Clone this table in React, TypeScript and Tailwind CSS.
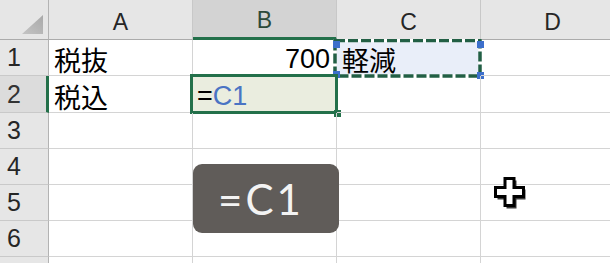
import React from "react";

const FONT = { fontFamily: '"Liberation Sans", "Noto Sans CJK JP", sans-serif' };

function HeaderCell({ label, selected }: { label: string; selected?: boolean }) {
  return (
    <div
      className={
        "flex items-end justify-center border-r border-r-[#c8c8c8] text-[23px] leading-none pb-[5px] " +
        (selected
          ? "bg-[#d3d3d3] border-b-[3px] border-b-[#23704a] text-[#2c4a3a] pt-0"
          : "bg-[#e6e6e6] border-b border-b-[#ababab] text-[#262626]")
      }
    >
      {label}
    </div>
  );
}

function RowHead({ n, selected }: { n?: number; selected?: boolean }) {
  return (
    <div
      className={
        "flex items-center pl-[7px] text-[25px] leading-none border-b border-b-[#c9c9c9] " +
        (selected
          ? "bg-[#dcdcdc] border-r-[3px] border-r-[#23704a] text-[#333]"
          : "bg-[#e6e6e6] border-r border-r-[#b3b3b3] text-[#262626]")
      }
    >
      {n}
    </div>
  );
}

function Cell({
  children,
  className = "",
}: {
  children?: React.ReactNode;
  className?: string;
}) {
  return (
    <div
      className={
        "relative flex items-end border-r border-b border-[#d4d4d4] text-[27px] leading-none pb-[2px] " +
        className
      }
    >
      {children}
    </div>
  );
}

function Handle({ className }: { className: string }) {
  return <div className={"absolute w-[7px] h-[7px] bg-[#3c6fcb] " + className} />;
}

export default function App() {
  return (
    <div className="relative w-[610px] h-[263px] overflow-hidden bg-white" style={FONT}>
      <div className="grid grid-cols-[49px_144px_144px_144px_144px] grid-rows-[40px_36px_37px_36px_36px_36px_36px_36px]">
        {/* header row */}
        <div className="relative bg-[#e6e6e6] border-r border-r-[#b3b3b3] border-b border-b-[#ababab]">
          <svg className="absolute left-[22px] top-[15px]" width="21" height="19" viewBox="0 0 21 19">
            <defs>
              <linearGradient id="tri" x1="0" y1="1" x2="1" y2="0">
                <stop offset="0" stopColor="#c4c4c4" />
                <stop offset="1" stopColor="#a9a9a9" />
              </linearGradient>
            </defs>
            <polygon points="21,0 21,19 0,19" fill="url(#tri)" />
          </svg>
        </div>
        <HeaderCell label="A" />
        <HeaderCell label="B" selected />
        <HeaderCell label="C" />
        <HeaderCell label="D" />

        {/* row 1 */}
        <RowHead n={1} />
        <Cell className="pl-[5px]">
          <span style={{ fontFamily: '"Noto Sans CJK JP", sans-serif' }}>税抜</span>
        </Cell>
        <Cell className="justify-end pr-[6px]">
          <span>700</span>
        </Cell>
        <Cell className="bg-[#e9eef9] pl-[5px] overflow-visible">
          <span style={{ fontFamily: '"Noto Sans CJK JP", sans-serif' }}>軽減</span>
          {/* marching ants */}
          <svg
            className="absolute left-[-4px] top-[-1px] pointer-events-none"
            width="150"
            height="39"
            viewBox="0 0 150 39"
          >
            <rect x="2" y="1.5" width="145" height="35.5" fill="none" stroke="#ffffff" strokeWidth="3.5" />
            <rect
              x="2"
              y="1.5"
              width="145"
              height="35.5"
              fill="none"
              stroke="#225f45"
              strokeWidth="3.5"
              strokeDasharray="10 3"
            />
          </svg>
          <Handle className="left-[-4px] top-[1px] h-[5px]" />
          <Handle className="right-[-4px] top-[1px] h-[5px]" />
          <Handle className="left-[-4px] bottom-[-3px]" />
          <Handle className="right-[-4px] bottom-[-4px]" />
        </Cell>
        <Cell />

        {/* row 2 */}
        <RowHead n={2} selected />
        <Cell className="pl-[5px]">
          <span style={{ fontFamily: '"Noto Sans CJK JP", sans-serif' }}>税込</span>
        </Cell>
        <Cell className="bg-[#eaeddf] pl-[4px]">
          <span>=</span>
          <span className="text-[#4a74c4]">C1</span>
          <div className="absolute left-[-3px] top-[-2px] right-[-2px] bottom-[-2px] border-[3px] border-[#23704a] pointer-events-none" />
          <div className="absolute right-[-5px] bottom-[-5px] w-[7px] h-[7px] bg-[#23704a]" />
        </Cell>
        <Cell />
        <Cell />

        {[3, 4, 5, 6].map((n) => (
          <React.Fragment key={n}>
            <RowHead n={n} />
            <Cell />
            <Cell />
            <Cell />
            <Cell />
          </React.Fragment>
        ))}
        <RowHead />
        <Cell />
        <Cell />
        <Cell />
        <Cell />
      </div>

      {/* tooltip overlay */}
      <div
        className="absolute left-[193px] top-[164px] w-[146px] h-[69px] rounded-[9px] bg-[#605c59] flex items-center justify-center pr-[10px] text-[#f3f3f3] text-[42px] font-normal leading-none"
        style={{ fontFamily: 'Lato, "Liberation Sans", sans-serif' }}
      >
        <span className="tracking-[3px]">=C1</span>
      </div>

      {/* cursor */}
      <svg className="absolute left-[493px] top-[176px]" width="34" height="33" viewBox="0 0 34 33">
        <polygon
          points="12,3 22,3 22,12 31,12 31,22 22,22 22,31 12,31 12,22 3,22 3,12 12,12"
          fill="#3a3a3a"
          transform="translate(1.5,1.5)"
        />
        <polygon
          points="12,2.5 21,2.5 21,11.5 30.5,11.5 30.5,20.5 21,20.5 21,29.5 12,29.5 12,20.5 2.5,20.5 2.5,11.5 12,11.5"
          fill="#ffffff"
          stroke="#000000"
          strokeWidth="3"
          strokeLinejoin="miter"
        />
      </svg>
    </div>
  );
}
